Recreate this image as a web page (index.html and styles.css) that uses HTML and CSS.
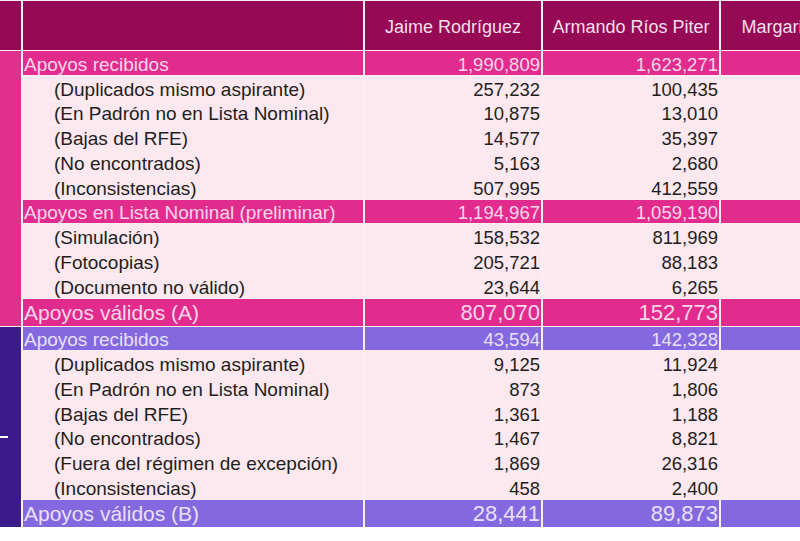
FILE: index.html
```html
<!DOCTYPE html>
<html lang="es">
<head>
<meta charset="utf-8">
<title>Apoyos ciudadanos</title>
<link rel="stylesheet" href="styles.css">
</head>
<body>
<div class="sheet">
  <div class="grid">
    <div class="cell head"></div>
    <div class="cell head"></div>
    <div class="cell head name">Jaime Rodríguez</div>
    <div class="cell head name">Armando Ríos Piter</div>
    <div class="cell head name">Margarita Zavala</div>

    <div class="strip strip-a"></div>
    <div class="cell sec lbl">Apoyos recibidos</div>
    <div class="cell sec num">1,990,809</div>
    <div class="cell sec num">1,623,271</div>
    <div class="cell sec"></div>

    <div class="cell row lbl sub">(Duplicados mismo aspirante)</div>
    <div class="cell row num">257,232</div>
    <div class="cell row num">100,435</div>
    <div class="cell row"></div>

    <div class="cell row lbl sub">(En Padrón no en Lista Nominal)</div>
    <div class="cell row num">10,875</div>
    <div class="cell row num">13,010</div>
    <div class="cell row"></div>

    <div class="cell row lbl sub">(Bajas del RFE)</div>
    <div class="cell row num">14,577</div>
    <div class="cell row num">35,397</div>
    <div class="cell row"></div>

    <div class="cell row lbl sub">(No encontrados)</div>
    <div class="cell row num">5,163</div>
    <div class="cell row num">2,680</div>
    <div class="cell row"></div>

    <div class="cell row lbl sub">(Inconsistencias)</div>
    <div class="cell row num">507,995</div>
    <div class="cell row num">412,559</div>
    <div class="cell row"></div>

    <div class="cell sec lbl">Apoyos en Lista Nominal (preliminar)</div>
    <div class="cell sec num">1,194,967</div>
    <div class="cell sec num">1,059,190</div>
    <div class="cell sec"></div>

    <div class="cell row lbl sub">(Simulación)</div>
    <div class="cell row num">158,532</div>
    <div class="cell row num">811,969</div>
    <div class="cell row"></div>

    <div class="cell row lbl sub">(Fotocopias)</div>
    <div class="cell row num">205,721</div>
    <div class="cell row num">88,183</div>
    <div class="cell row"></div>

    <div class="cell row lbl sub">(Documento no válido)</div>
    <div class="cell row num">23,644</div>
    <div class="cell row num">6,265</div>
    <div class="cell row"></div>

    <div class="cell sec big lbl">Apoyos válidos (A)</div>
    <div class="cell sec big num">807,070</div>
    <div class="cell sec big num">152,773</div>
    <div class="cell sec big"></div>

    <div class="strip strip-b"><span class="dash"></span></div>
    <div class="cell psec lbl">Apoyos recibidos</div>
    <div class="cell psec num">43,594</div>
    <div class="cell psec num">142,328</div>
    <div class="cell psec"></div>

    <div class="cell row lbl sub">(Duplicados mismo aspirante)</div>
    <div class="cell row num">9,125</div>
    <div class="cell row num">11,924</div>
    <div class="cell row"></div>

    <div class="cell row lbl sub">(En Padrón no en Lista Nominal)</div>
    <div class="cell row num">873</div>
    <div class="cell row num">1,806</div>
    <div class="cell row"></div>

    <div class="cell row lbl sub">(Bajas del RFE)</div>
    <div class="cell row num">1,361</div>
    <div class="cell row num">1,188</div>
    <div class="cell row"></div>

    <div class="cell row lbl sub">(No encontrados)</div>
    <div class="cell row num">1,467</div>
    <div class="cell row num">8,821</div>
    <div class="cell row"></div>

    <div class="cell row lbl sub">(Fuera del régimen de excepción)</div>
    <div class="cell row num">1,869</div>
    <div class="cell row num">26,316</div>
    <div class="cell row"></div>

    <div class="cell row lbl sub">(Inconsistencias)</div>
    <div class="cell row num">458</div>
    <div class="cell row num">2,400</div>
    <div class="cell row"></div>

    <div class="cell psec big lbl">Apoyos válidos (B)</div>
    <div class="cell psec big num">28,441</div>
    <div class="cell psec big num">89,873</div>
    <div class="cell psec big"></div>
  </div>
</div>
</body>
</html>
```
FILE: styles.css
```css
html, body {
  margin: 0;
  padding: 0;
  background: #ffffff;
  overflow: hidden;
}

.sheet {
  width: 800px;
  height: 541px;
  overflow: hidden;
  background: #ffffff;
}

.grid {
  display: grid;
  width: 897px;
  grid-template-columns: 21px 340px 176px 176px 176px;
  grid-template-rows: 49px repeat(10, 23.75px) 27px repeat(7, 23.75px) 27px;
  column-gap: 2px;
  row-gap: 1px;
  padding-top: 1px;
  background: #fbeef3;
  font-family: "Liberation Sans", Arial, sans-serif;
}

.cell {
  display: flex;
  align-items: center;
  white-space: nowrap;
  overflow: hidden;
  box-sizing: border-box;
}

.head {
  background: #960a55;
  color: #f6dfeb;
  font-size: 18px;
}

.name {
  justify-content: center;
  padding-top: 3px;
}

.strip {
  display: flex;
  flex-direction: column;
}

.strip-a {
  grid-row: span 11;
  background: #e0308e;
}

.strip-b {
  grid-row: span 8;
  background: #3b1a8b;
  padding-top: 109px;
}

.dash {
  display: block;
  width: 8px;
  height: 2px;
  background: #ffffff;
}

.sec {
  background: #e12c8e;
  color: #fcd6ea;
}

.psec {
  background: #8468df;
  color: #e8e0fd;
}

.row {
  background: #fce8ee;
  color: #1e1e1e;
}

.lbl {
  font-size: 19px;
  padding-left: 1px;
  padding-top: 4px;
}

.sub {
  padding-left: 31px;
}

.num {
  justify-content: flex-end;
  padding-right: 1px;
  padding-top: 4px;
  font-size: 18.5px;
}

.big.lbl {
  font-size: 21px;
  padding-top: 2px;
}

.big.num {
  font-size: 22px;
  padding-top: 2px;
}
```
